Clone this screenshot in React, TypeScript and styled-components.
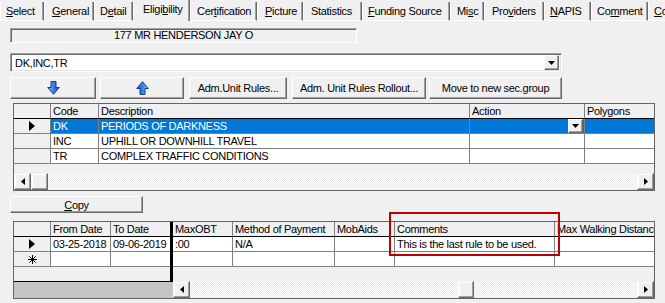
import React from "react";
import styled, { createGlobalStyle } from "styled-components";

const GlobalStyle = createGlobalStyle`
  html, body {
    margin: 0;
    padding: 0;
    background: #f0f0f0;
  }
  body {
    font: 11px "Liberation Sans", Arial, sans-serif;
    letter-spacing: -0.3px;
    color: #000;
    width: 665px;
    height: 303px;
    overflow: hidden;
  }
  * { box-sizing: border-box; }
`;

type Tab = { label: string; u: number; w: number; pad: number; active?: boolean };

const tabs: Tab[] = [
  { label: "Select", u: 0, w: 44, pad: 5 },
  { label: "General", u: 0, w: 50, pad: 7 },
  { label: "Detail", u: 1, w: 39, pad: 5 },
  { label: "Eligibility", u: 5, w: 57, pad: 9, active: true },
  { label: "Certification", u: 3, w: 67, pad: 6 },
  { label: "Picture", u: 0, w: 46, pad: 7 },
  { label: "Statistics", u: -1, w: 59, pad: 7 },
  { label: "Funding Source", u: 0, w: 88, pad: 5 },
  { label: "Misc", u: 2, w: 34, pad: 6 },
  { label: "Providers", u: 3, w: 60, pad: 7 },
  { label: "NAPIS", u: 0, w: 47, pad: 5 },
  { label: "Comment", u: 2, w: 57, pad: 5 },
  { label: "Contacts", u: 0, w: 40, pad: 5 },
];

const grid1Cols = "37px 48px 371px 115px 1fr";
const grid2Frozen = "37px 60px 59px";
const grid2Scroll = "60px 102px 60px 160px 1fr";

const rules = [
  { code: "DK", desc: "PERIODS OF DARKNESS", sel: true },
  { code: "INC", desc: "UPHILL OR DOWNHILL TRAVEL" },
  { code: "TR", desc: "COMPLEX TRAFFIC CONDITIONS" },
];

function Mnemonic({ text, u }: { text: string; u: number }) {
  if (u < 0) return <>{text}</>;
  return (
    <>
      {text.slice(0, u)}
      <u>{text[u]}</u>
      {text.slice(u + 1)}
    </>
  );
}

function BlueArrow({ up }: { up?: boolean }) {
  return (
    <svg width="13" height="14" viewBox="0 0 13 14">
      <defs>
        <linearGradient id={up ? "gu" : "gd"} x1="0" y1="0" x2="1" y2="0">
          <stop offset="0" stopColor="#8cc4ff" />
          <stop offset="0.45" stopColor="#3d86e6" />
          <stop offset="1" stopColor="#1648a8" />
        </linearGradient>
      </defs>
      <g transform={up ? "rotate(180 6.5 7)" : undefined}>
        <path
          d="M4 0.5 H9 V6.5 H12.3 L6.5 13.3 L0.7 6.5 H4 Z"
          fill={`url(#${up ? "gu" : "gd"})`}
          stroke="#173c8c"
          strokeWidth="1"
          strokeLinejoin="round"
        />
      </g>
    </svg>
  );
}

function RowMarker() {
  return (
    <svg width="6" height="10" viewBox="0 0 6 10">
      <path d="M0 0 L6 5 L0 10 Z" fill="#000" />
    </svg>
  );
}

function NewRowMarker() {
  return (
    <svg width="9" height="9" viewBox="0 0 9 9">
      <g stroke="#000" strokeWidth="1">
        <line x1="4.5" y1="0" x2="4.5" y2="9" />
        <line x1="0" y1="4.5" x2="9" y2="4.5" />
        <line x1="1.3" y1="1.3" x2="7.7" y2="7.7" />
        <line x1="7.7" y1="1.3" x2="1.3" y2="7.7" />
      </g>
    </svg>
  );
}

function Tri({ dir }: { dir: "left" | "right" | "down" }) {
  if (dir === "down")
    return (
      <svg width="7" height="4" viewBox="0 0 7 4">
        <path d="M0 0 H7 L3.5 4 Z" fill="#000" />
      </svg>
    );
  return (
    <svg width="4" height="7" viewBox="0 0 4 7">
      <path d={dir === "left" ? "M4 0 V7 L0 3.5 Z" : "M0 0 V7 L4 3.5 Z"} fill="#000" />
    </svg>
  );
}

function ScrollBar({ thumbAt, thumbW }: { thumbAt?: number; thumbW?: number }) {
  return (
    <Scroll>
      <ScrollBtn>
        <Tri dir="left" />
      </ScrollBtn>
      <Track>
        {thumbAt !== undefined && <Thumb style={{ left: thumbAt, width: thumbW }} />}
      </Track>
      <ScrollBtn>
        <Tri dir="right" />
      </ScrollBtn>
    </Scroll>
  );
}

export default function App() {
  return (
    <Page>
      <GlobalStyle />
      <TabStrip>
        {tabs.map((t) => (
          <TabItem key={t.label} $w={t.w} $pad={t.pad} $active={!!t.active}>
            <Mnemonic text={t.label} u={t.u} />
          </TabItem>
        ))}
        <TabRest />
      </TabStrip>

      <Body>
        <NameField>177 MR HENDERSON JAY O</NameField>

        <Combo>
          <ComboText>DK,INC,TR</ComboText>
          <ComboBtn>
            <Tri dir="down" />
          </ComboBtn>
        </Combo>

        <ButtonRow>
          <Btn $w={86}>
            <BlueArrow />
          </Btn>
          <Btn $w={84} $ml={4}>
            <BlueArrow up />
          </Btn>
          <Btn $w={98} $ml={5}>Adm.Unit Rules...</Btn>
          <Btn $w={134} $ml={5}>Adm. Unit Rules Rollout...</Btn>
          <Btn $w={133} $ml={3}>Move to new sec.group</Btn>
        </ButtonRow>

        <GridBox $h={88}>
          <Pane>
            <GridRow $cols={grid1Cols}>
              <HeadCell />
              <HeadCell>Code</HeadCell>
              <HeadCell>Description</HeadCell>
              <HeadCell>Action</HeadCell>
              <HeadCell>Polygons</HeadCell>
            </GridRow>
            {rules.map((r) => (
              <GridRow key={r.code} $cols={grid1Cols}>
                <IndCell>{r.sel && <RowMarker />}</IndCell>
                <Cell $sel={r.sel}>{r.code}</Cell>
                <Cell $sel={r.sel}>{r.desc}</Cell>
                <Cell $sel={r.sel}>
                  {r.sel && (
                    <CellDrop>
                      <Tri dir="down" />
                    </CellDrop>
                  )}
                </Cell>
                <Cell $sel={r.sel} />
              </GridRow>
            ))}
            <Filler />
            <ScrollBar thumbAt={0} thumbW={17} />
          </Pane>
        </GridBox>

        <CopyBtn>
          <Mnemonic text="Copy" u={0} />
        </CopyBtn>

        <GridBox $h={78}>
          <FrozenPane>
            <FrozenBody>
              <GridRow $cols={grid2Frozen}>
                <HeadCell />
                <HeadCell>From Date</HeadCell>
                <HeadCell>To Date</HeadCell>
              </GridRow>
              <GridRow $cols={grid2Frozen}>
                <IndCell>
                  <RowMarker />
                </IndCell>
                <Cell>03-25-2018</Cell>
                <Cell>09-06-2019</Cell>
              </GridRow>
              <GridRow $cols={grid2Frozen}>
                <IndCell>
                  <NewRowMarker />
                </IndCell>
                <Cell />
                <Cell />
              </GridRow>
              <Filler />
            </FrozenBody>
            <FrozenFoot />
          </FrozenPane>
          <Pane>
            <GridRow $cols={grid2Scroll}>
              <HeadCell>MaxOBT</HeadCell>
              <HeadCell>Method of Payment</HeadCell>
              <HeadCell>MobAids</HeadCell>
              <HeadCell>Comments</HeadCell>
              <HeadCell>Max Walking Distance</HeadCell>
            </GridRow>
            <GridRow $cols={grid2Scroll}>
              <Cell>:00</Cell>
              <Cell>N/A</Cell>
              <Cell />
              <Cell>This is the last rule to be used.</Cell>
              <Cell />
            </GridRow>
            <GridRow $cols={grid2Scroll}>
              <Cell />
              <Cell />
              <Cell />
              <Cell />
              <Cell />
            </GridRow>
            <Filler />
            <ScrollBar thumbAt={268} thumbW={16} />
          </Pane>
        </GridBox>
      </Body>

      <Highlight />
    </Page>
  );
}

const Page = styled.div`
  position: relative;
  width: 665px;
  height: 303px;
  display: flex;
  flex-direction: column;
  background: #f0f0f0;
  overflow: hidden;
`;

const TabStrip = styled.div`
  display: flex;
  align-items: flex-end;
  height: 21px;
  white-space: nowrap;
`;

const TabItem = styled.div<{ $w: number; $pad: number; $active: boolean }>`
  flex: none;
  width: ${(p) => p.$w}px;
  height: ${(p) => (p.$active ? 21 : 19)}px;
  padding: 3px 0 0 ${(p) => p.$pad}px;
  border-left: 1px solid #fff;
  border-right: 1px solid #696969;
  border-bottom: ${(p) => (p.$active ? "none" : "1px solid #fff")};
  box-shadow: inset -1px 0 #a0a0a0;
  overflow: hidden;
`;

const TabRest = styled.div`
  flex: 1;
  border-bottom: 1px solid #fff;
`;

const Body = styled.div`
  display: flex;
  flex-direction: column;
  align-items: flex-start;
  padding-left: 10px;
`;

const NameField = styled.div`
  margin-top: 7px;
  width: 347px;
  height: 15px;
  line-height: 13px;
  text-align: center;
  border: 1px solid;
  border-color: #a0a0a0 #fff #fff #a0a0a0;
  box-shadow: inset 1px 1px #696969;
`;

const Combo = styled.div`
  margin-top: 10px;
  width: 552px;
  height: 19px;
  display: flex;
  align-items: center;
  background: #fff;
  border: 1px solid;
  border-color: #a0a0a0 #fff #fff #a0a0a0;
  box-shadow: inset 1px 1px #696969, inset -1px -1px #e3e3e3;
  padding: 2px 2px 2px 4px;
`;

const ComboText = styled.div`
  flex: 1;
`;

const ComboBtn = styled.div`
  width: 15px;
  height: 15px;
  display: flex;
  align-items: center;
  justify-content: center;
  background: #f0f0f0;
  border: 1px solid;
  border-color: #fff #696969 #696969 #fff;
  box-shadow: inset -1px -1px #a0a0a0;
`;

const ButtonRow = styled.div`
  margin-top: 5px;
  display: flex;
`;

const Btn = styled.div<{ $w: number; $ml?: number }>`
  width: ${(p) => p.$w}px;
  margin-left: ${(p) => p.$ml ?? 0}px;
  height: 22px;
  display: flex;
  align-items: center;
  justify-content: center;
  background: #f0f0f0;
  border: 1px solid;
  border-color: #fff #696969 #696969 #fff;
  box-shadow: inset -1px -1px #a0a0a0;
  white-space: nowrap;
`;

const CopyBtn = styled(Btn).attrs({ $w: 133 })`
  margin-top: 5px;
  height: 17px;
`;

const GridBox = styled.div<{ $h: number }>`
  margin: 4px 0 0 3px;
  width: 642px;
  height: ${(p) => p.$h}px;
  display: flex;
  border: 1px solid #646464;
  background: #f0f0f0;
  ${CopyBtn} + & {
    margin-top: 8px;
  }
`;

const Pane = styled.div`
  flex: 1;
  min-width: 0;
  display: flex;
  flex-direction: column;
`;

const FrozenPane = styled.div`
  flex: none;
  width: 159px;
  display: flex;
  flex-direction: column;
`;

const FrozenBody = styled.div`
  flex: 1;
  display: flex;
  flex-direction: column;
  border-right: 3px solid #000;
  border-bottom: 1px solid #000;
`;

const FrozenFoot = styled.div`
  height: 16px;
  background: #c4c4c4;
`;

const GridRow = styled.div<{ $cols: string }>`
  display: grid;
  grid-template-columns: ${(p) => p.$cols};
  height: 15px;
  flex: none;
`;

const CellBase = styled.div`
  position: relative;
  height: 15px;
  line-height: 14px;
  padding-left: 2px;
  white-space: nowrap;
  overflow: hidden;
  border-right: 1px solid #808080;
  border-bottom: 1px solid #808080;
  &:last-child {
    border-right: none;
  }
`;

const HeadCell = styled(CellBase)`
  background: #f0f0f0;
  border-bottom-color: #000;
`;

const Cell = styled(CellBase)<{ $sel?: boolean }>`
  background: ${(p) => (p.$sel ? "#0078d7" : "#fff")};
  color: ${(p) => (p.$sel ? "#fff" : "#000")};
`;

const IndCell = styled(CellBase)`
  background: #f0f0f0;
  display: flex;
  align-items: center;
  justify-content: center;
  padding: 0;
`;

const CellDrop = styled.div`
  position: absolute;
  right: 1px;
  top: 0;
  width: 15px;
  height: 14px;
  display: flex;
  align-items: center;
  justify-content: center;
  background: #f0f0f0;
  border: 1px solid;
  border-color: #fff #696969 #696969 #fff;
  box-shadow: inset -1px -1px #a0a0a0;
`;

const Filler = styled.div`
  flex: 1;
`;

const Scroll = styled.div`
  flex: none;
  height: 17px;
  display: flex;
`;

const ScrollBtn = styled.div`
  flex: none;
  width: 17px;
  height: 17px;
  display: flex;
  align-items: center;
  justify-content: center;
  background: #f0f0f0;
  border: 1px solid;
  border-color: #f0f0f0 #696969 #696969 #fff;
  box-shadow: inset -1px -1px #a0a0a0, inset 1px 1px #fff;
`;

const Track = styled.div`
  position: relative;
  flex: 1;
  background: repeating-conic-gradient(#ffffff 0 25%, #e9e9e9 0 50%) 0 0 / 2px 2px;
`;

const Thumb = styled.div`
  position: absolute;
  top: 0;
  height: 17px;
  background: #f0f0f0;
  border: 1px solid;
  border-color: #f0f0f0 #696969 #696969 #fff;
  box-shadow: inset -1px -1px #a0a0a0, inset 1px 1px #fff;
`;

const Highlight = styled.div`
  position: absolute;
  left: 389px;
  top: 212px;
  width: 171px;
  height: 44px;
  border: 2px solid #c00000;
  pointer-events: none;
`;
